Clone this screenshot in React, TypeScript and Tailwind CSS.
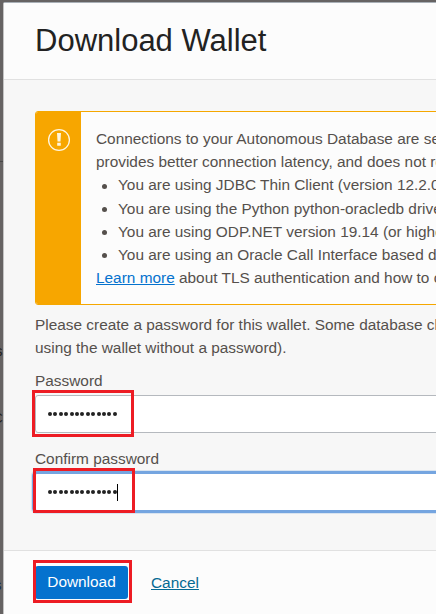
import React from "react";

const bullets = [
  "You are using JDBC Thin Client (version 12.2.0.1 or higher)",
  "You are using the Python python-oracledb driver",
  "You are using ODP.NET version 19.14 (or higher)",
  "You are using an Oracle Call Interface based driver",
];

function Dots() {
  return (
    <span className="flex gap-[1.4px]">
      {Array.from({ length: 13 }, (_, i) => (
        <span key={i} className="h-1 w-1 rounded-full bg-[#222]" />
      ))}
    </span>
  );
}

function WarningIcon() {
  return (
    <svg width="24" height="24" viewBox="0 0 24 24" fill="none">
      <circle cx="12" cy="12" r="10.4" stroke="#fef6e0" strokeWidth="1.3" />
      <path d="M10 5h4l-.5 8.6h-3z" fill="#fef6e0" />
      <path d="M10.2 14.8h3.6v3h-3.6z" fill="#fef6e0" />
    </svg>
  );
}

export default function App() {
  return (
    <div className="relative h-[614px] w-[436px] overflow-hidden bg-[#666363] pl-[3px] pt-[2px] font-['Liberation_Sans',Arial,sans-serif] text-[15.4px] text-[#55504c]">
      <span className="absolute left-0 top-[161px] h-px w-[3px] bg-[#484848]" />
      <span className="absolute -left-[5px] top-[339px] text-[15px] leading-[23px] text-[#222]">s</span>
      <span className="absolute -left-[8px] top-[406px] text-[15px] leading-[23px] text-[#222]">C</span>
      <span className="absolute -left-[6px] top-[573px] text-[15px] leading-[23px] text-[#182b4e]">s</span>

      <div className="relative flex h-[612px] w-[640px] flex-col rounded-tl-[2px] border-l border-t border-l-[#c3c3c3] border-t-[#a9b0b7] bg-[#f7f7f7]">
        <header className="h-[77px] shrink-0 border-b border-[#e1e1e1] bg-[#fcfcfc] pl-[31px] pt-[19px]">
          <h1 className="text-[31px] leading-[37px] text-[#222]">Download Wallet</h1>
        </header>

        <main className="flex h-[471px] shrink-0 flex-col border-b border-[#e1e1e1] pl-[31px] pt-[31px]">
          <section className="flex h-[194px] shrink-0 overflow-hidden rounded-[3px] border border-[#f5a700] bg-[#fcfcfc]">
            <div className="flex w-[45px] shrink-0 justify-center bg-[#f7a600] pt-[16px]">
              <WarningIcon />
            </div>
            <div className="whitespace-nowrap pl-[15px] pt-[15px] leading-[23.2px]">
              <p>Connections to your Autonomous Database are secured</p>
              <p>provides better connection latency, and does not require</p>
              <ul>
                {bullets.map((text) => (
                  <li key={text} className="flex items-center">
                    <span className="ml-[6px] mr-[11px] mt-[2px] h-[5px] w-[5px] rounded-full bg-[#55504c]" />
                    {text}
                  </li>
                ))}
              </ul>
              <p>
                <a className="text-[#0572ce] underline">Learn more</a> about TLS authentication and how to configure
              </p>
            </div>
          </section>

          <p className="mt-[8px] whitespace-nowrap leading-[23px]">
            Please create a password for this wallet. Some database clients
            <br />
            using the wallet without a password).
          </p>

          <label className="mt-[10px] block leading-[23px]">Password</label>
          <div className="relative mt-[3px] flex h-[38px] shrink-0 items-center rounded-[3px] border border-[#b5b9be] bg-white pl-[12px]">
            <Dots />
            <span className="absolute -left-[4px] -top-[6px] h-[47px] w-[102px] border-[3px] border-[#ed1c24]" />
          </div>

          <label className="mt-[14px] block leading-[23px]">Confirm password</label>
          <div className="relative mt-[4px] flex h-[36px] shrink-0 items-center rounded-[2px] bg-white pl-[13px] shadow-[0_0_0_3px_#75a5e0,0_0_0_4px_#d9e4f0]">
            <Dots />
            <span className="h-[17px] w-px bg-black" />
            <span className="absolute -left-[2px] -top-[6px] h-[45px] w-[102px] border-[3px] border-[#ed1c24]" />
          </div>
        </main>

        <footer className="flex grow items-start bg-[#fcfcfc] pl-[31px] pt-[15px]">
          <div className="relative">
            <button className="block h-[33px] w-[93px] rounded-[3px] bg-[#0572ce] pb-[1px] text-[15.4px] text-white">Download</button>
            <span className="absolute -left-[2px] -top-[6px] h-[43px] w-[99px] border-[3px] border-[#ed1c24]" />
          </div>
          <a className="ml-[23px] mt-[5px] leading-[23px] text-[#046a93] underline">Cancel</a>
        </footer>
      </div>
    </div>
  );
}
